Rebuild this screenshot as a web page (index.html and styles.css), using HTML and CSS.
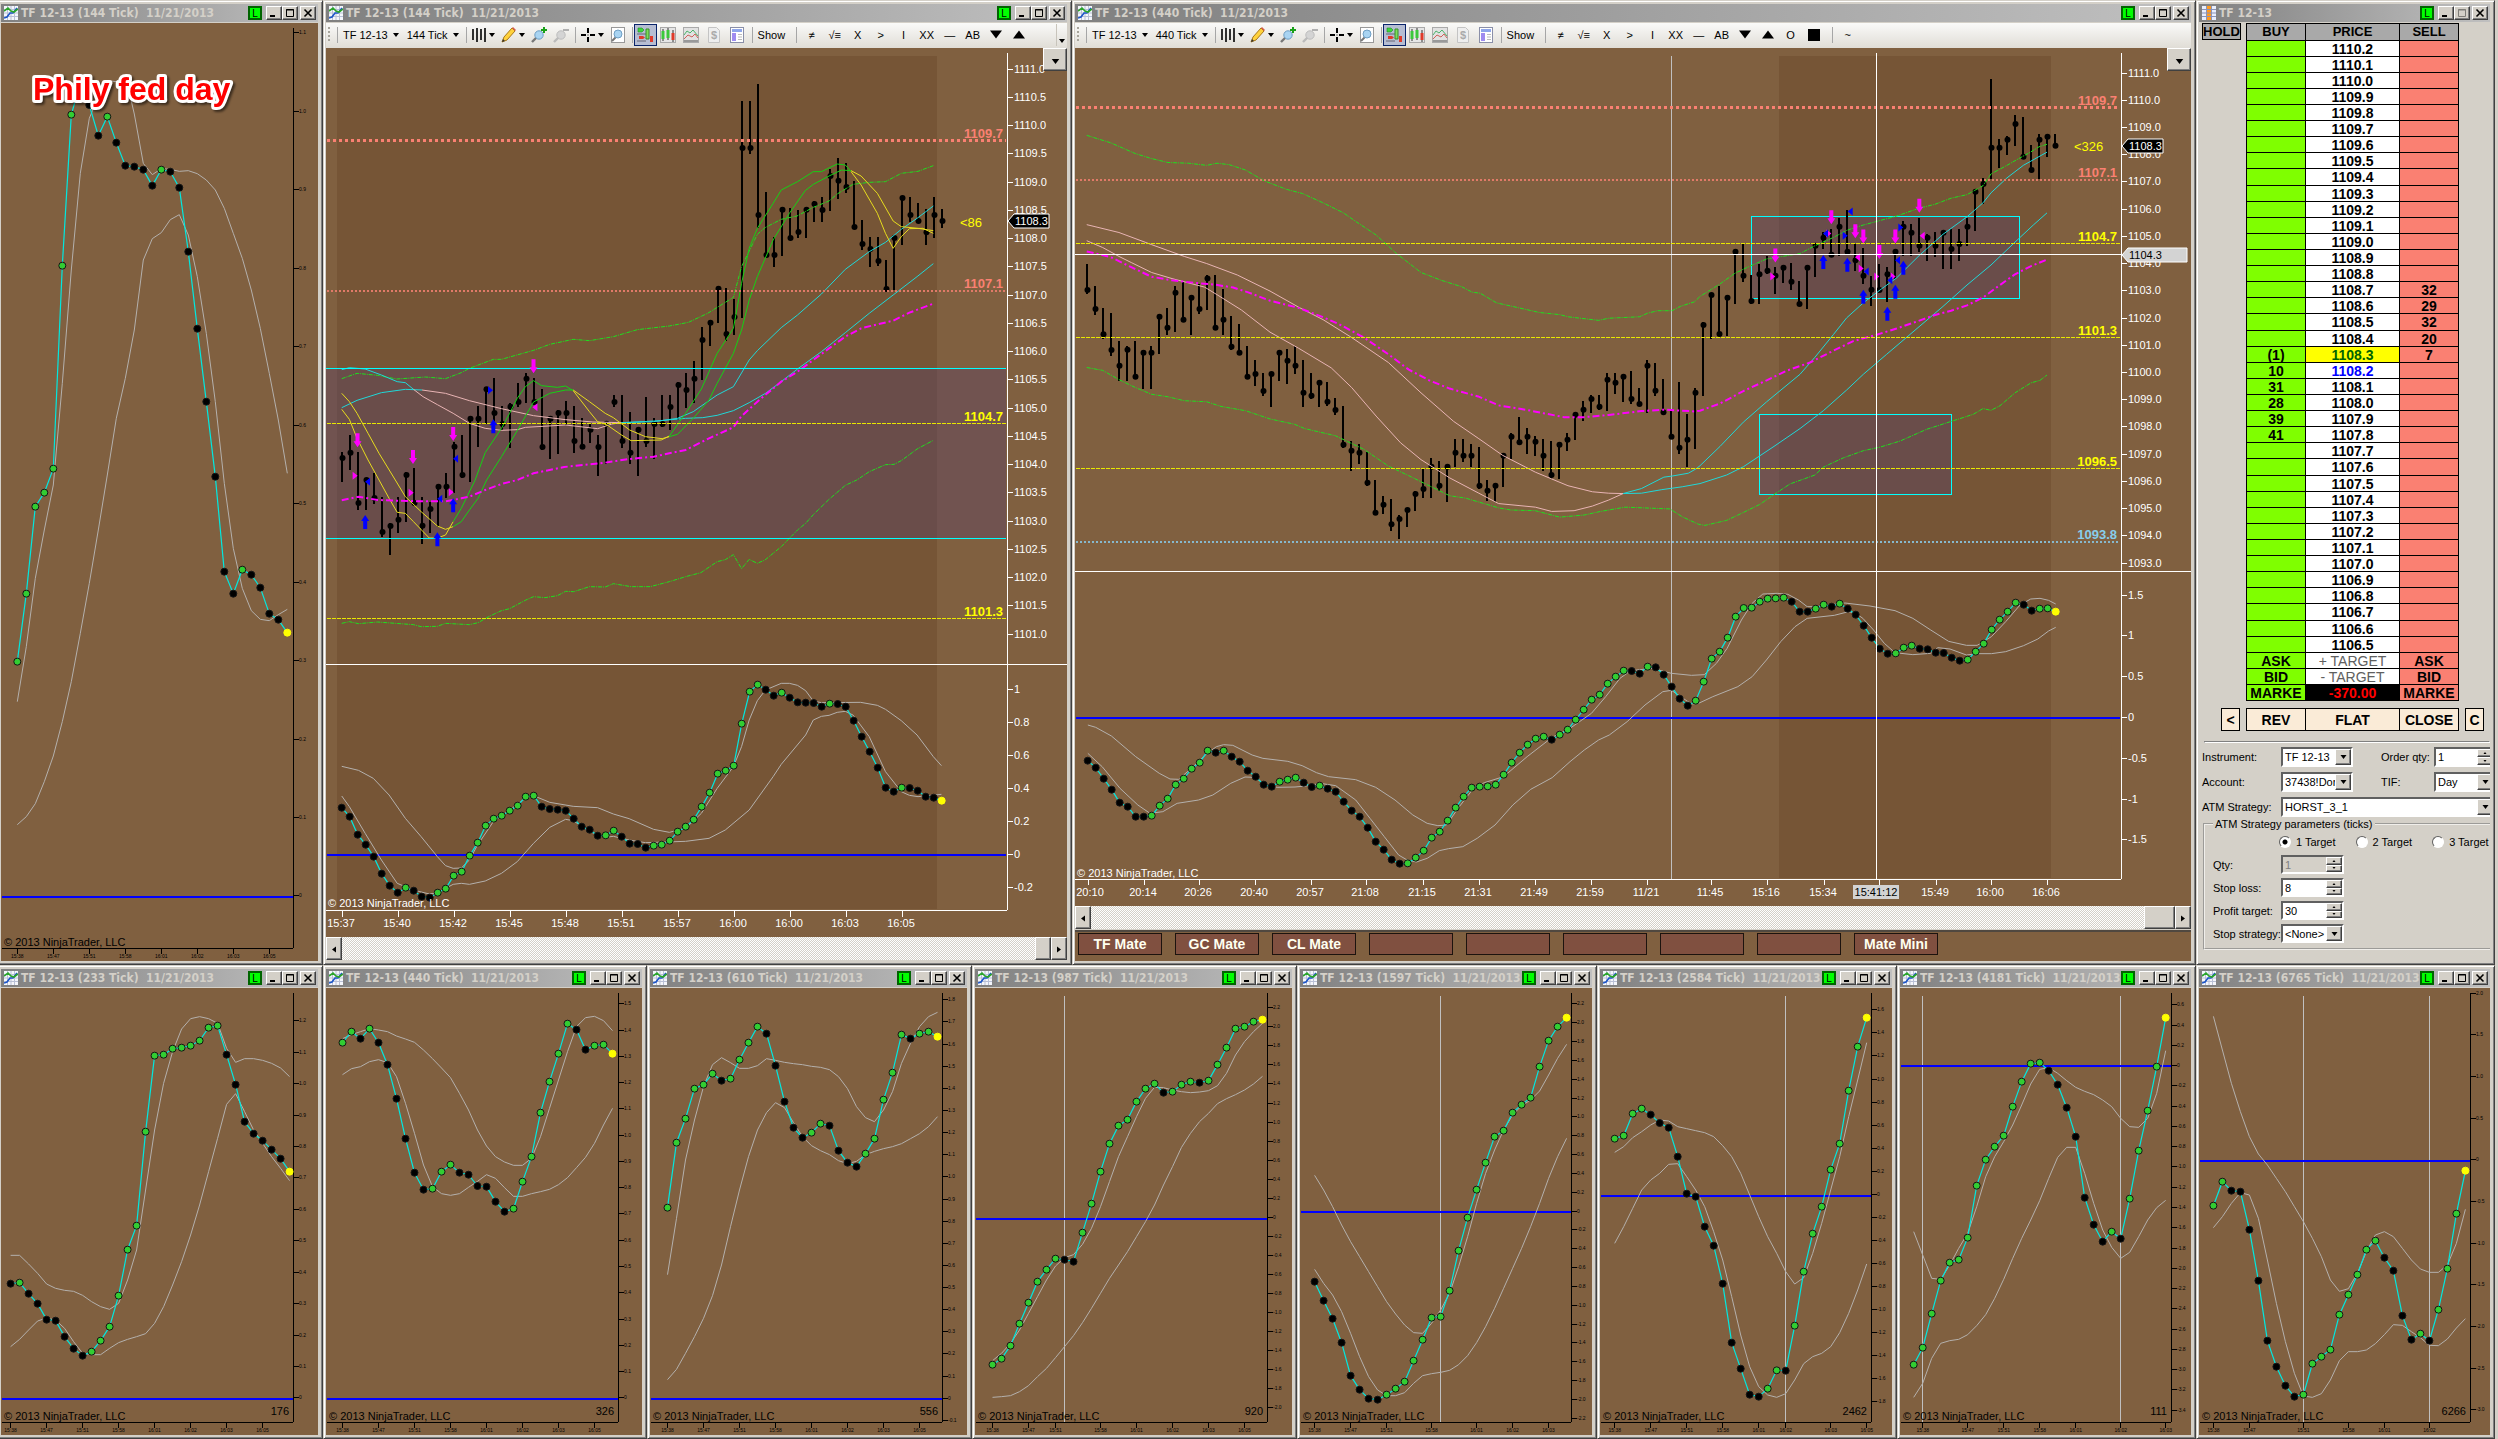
FILE: index.html
```html
<!DOCTYPE html>
<html lang="en">
<head>
  <meta charset="UTF-8" />
  <title>TF 12-13 workspace</title>
  <link rel="stylesheet" href="styles.css">
</head>
<body>

  <!-- shared icons -->
  <svg class="defs" aria-hidden="true">
    <symbol id="i-chart" viewBox="0 0 14 14">
      <rect width="14" height="14" fill="#f4f6fb"/>
      <path d="M0 3.5h14M0 7h14M0 10.5h14M3.5 0v14M7 0v14M10.5 0v14" stroke="#b9c0d6"/>
      <path d="M0 12l3-1 3-4 3 0 4-5" stroke="#1d56c8" stroke-width="1.6" fill="none"/>
      <path d="M0 5l4-3 3 3 3 1 4-3" stroke="#2aa52a" stroke-width="1.6" fill="none"/>
    </symbol>
    <symbol id="i-dom" viewBox="0 0 14 14">
      <rect width="14" height="14" fill="#e8eefc"/>
      <rect x="5" width="4" height="14" fill="#ff9a1e"/>
      <path d="M0 3.5h14M0 7h14M0 10.5h14M4.5 0v14M9.5 0v14" stroke="#8a93b8"/>
    </symbol>
    <symbol id="i-min" viewBox="0 0 12 10"><path d="M2 8h5" stroke="#000" stroke-width="2"/></symbol>
    <symbol id="i-max" viewBox="0 0 12 10"><path d="M2.5 1.5h7v7h-7zM2 2h8" stroke="#000" fill="none"/></symbol>
    <symbol id="i-close" viewBox="0 0 12 10"><path d="M2.5 1.5l7 7M9.5 1.5l-7 7" stroke="#000" stroke-width="1.6"/></symbol>
    <symbol id="i-down" viewBox="0 0 6 4"><path d="M0 0h6L3 4z"/></symbol>
    <symbol id="i-up" viewBox="0 0 6 4"><path d="M0 4h6L3 0z"/></symbol>
    <symbol id="i-left" viewBox="0 0 4 6"><path d="M4 0v6L0 3z"/></symbol>
    <symbol id="i-right" viewBox="0 0 4 6"><path d="M0 0v6l4-3z"/></symbol>
    <symbol id="i-bars" viewBox="0 0 16 16"><path d="M2 2v11M6 1v14M10 2v11M14 1v14" stroke="#000" stroke-width="1.6"/></symbol>
    <symbol id="i-pencil" viewBox="0 0 16 16">
      <path d="M1 15l2-5 8-9 3 3-8 9z" fill="#ffd23c" stroke="#a8781a"/>
      <path d="M1 15l1-3 2 2z" fill="#333"/><path d="M11 1l3 3 1-1-3-3z" fill="#d65b4a"/>
    </symbol>
    <symbol id="i-zoomin" viewBox="0 0 16 16">
      <path d="M6 10l-5 5" stroke="#777" stroke-width="2.4"/>
      <circle cx="8" cy="8" r="4.2" fill="#a9d4f2" stroke="#6f9fc4"/>
      <path d="M13 0v6M10 3h6" stroke="#18a018" stroke-width="2"/>
    </symbol>
    <symbol id="i-zoomout" viewBox="0 0 16 16">
      <path d="M6 10l-5 5" stroke="#bbb" stroke-width="2.4"/>
      <circle cx="8" cy="8" r="4.2" fill="#d4d4d4" stroke="#bdbdbd"/>
      <path d="M10 3h6" stroke="#b0b0b0" stroke-width="2"/>
    </symbol>
    <symbol id="i-cross" viewBox="0 0 16 16"><path d="M8 1v5M8 10v5M1 8h5M10 8h5" stroke="#000" stroke-width="2"/><rect x="7.5" y="7.5" width="1" height="1"/></symbol>
    <symbol id="i-page" viewBox="0 0 16 16">
      <rect x="1.5" y=".5" width="13" height="15" fill="#fff" stroke="#999"/>
      <path d="M6 10l-4 4" stroke="#777" stroke-width="2"/>
      <circle cx="8" cy="7" r="4" fill="#a9d4f2" stroke="#6f9fc4"/>
    </symbol>
    <symbol id="i-trader" viewBox="0 0 16 16">
      <path d="M1 1h4l2 2-2 2H1z" fill="#3cd63c" stroke="#1f8f1f" stroke-width=".6"/>
      <path d="M2 9h4l2 1.500-2 1.500H2z" fill="#e03a2a"/>
      <path d="M0 7h9M0 14h9" stroke="#667"/>
      <path d="M9 2h3v10H9z" fill="#7ddc5a" stroke="#398a2a"/><path d="M13 9h3v6h-3z" fill="#e03a2a"/>
    </symbol>
    <symbol id="i-candles" viewBox="0 0 16 16">
      <rect x=".5" y=".5" width="15" height="15" fill="#e6e6e6" stroke="#aaa"/>
      <path d="M3 2v12M8 1v12M13 3v12" stroke="#333"/>
      <path d="M1.5 4h3v8h-3zM6.5 3h3v8h-3z" fill="#3cc83c"/><path d="M11.500 6h3v7h-3z" fill="#e03a2a"/>
    </symbol>
    <symbol id="i-lines" viewBox="0 0 16 16">
      <rect x=".5" y=".5" width="15" height="15" fill="#e2e2e2" stroke="#aaa"/>
      <path d="M1 8l3-4 3 2 3-3 5 6" stroke="#4db36b" fill="none"/><path d="M1 12l4-4 4 2 3-3 3 4" stroke="#d0605a" fill="none"/>
      <path d="M1 14h14" stroke="#999" stroke-width="2"/>
    </symbol>
    <symbol id="i-money" viewBox="0 0 16 16">
      <path d="M2.500.5h8l3 3v12h-11z" fill="#eee" stroke="#c4c4c4"/>
      <text x="8" y="12" font-size="11" font-weight="bold" text-anchor="middle" fill="#aaa">$</text>
    </symbol>
    <symbol id="i-props" viewBox="0 0 16 16">
      <rect x="1.500" y=".5" width="13" height="15" fill="#fff" stroke="#8a8fa8"/>
      <rect x="3" y="2" width="10" height="3" fill="#8ea6ea"/><rect x="3" y="6" width="4" height="8" fill="#9f8cf0"/>
      <path d="M9 7.5h4M9 10h4M9 12.500h4" stroke="#bbb"/>
    </symbol>
  </svg>

  <main class="desktop">
    <div class="row row-top">

      <section class="window">
        <header class="titlebar">
          <svg class="app-icon"><use href="#i-chart"/></svg>
          <h2>TF 12-13 (144 Tick)&nbsp; 11/21/2013</h2>
          <span class="link">L</span>
          <button class="cap" aria-label="Minimize"><svg><use href="#i-min"/></svg></button><button class="cap" aria-label="Maximize"><svg><use href="#i-max"/></svg></button>
          <button class="cap cap-close" aria-label="Close"><svg><use href="#i-close"/></svg></button>
        </header>
        <svg class="chart" id="c144"></svg>
      </section>

      <section class="window">
        <header class="titlebar">
          <svg class="app-icon"><use href="#i-chart"/></svg>
          <h2>TF 12-13 (144 Tick)&nbsp; 11/21/2013</h2>
          <span class="link">L</span>
          <button class="cap" aria-label="Minimize"><svg><use href="#i-min"/></svg></button><button class="cap" aria-label="Maximize"><svg><use href="#i-max"/></svg></button>
          <button class="cap cap-close" aria-label="Close"><svg><use href="#i-close"/></svg></button>
        </header>
        <div class="toolbar">
          <span class="grip"></span><span class="sep"></span>
          <button>TF 12-13 <svg class="arrow"><use href="#i-down"/></svg></button>
          <button>144 Tick <svg class="arrow"><use href="#i-down"/></svg></button>
          <span class="sep"></span>
          <button class="tool" aria-label="Bar style"><svg><use href="#i-bars"/></svg><svg class="arrow"><use href="#i-down"/></svg></button>
          <button class="tool" aria-label="Draw"><svg><use href="#i-pencil"/></svg><svg class="arrow"><use href="#i-down"/></svg></button>
          <button class="tool" aria-label="Zoom in"><svg><use href="#i-zoomin"/></svg></button>
          <button class="tool" aria-label="Zoom out"><svg><use href="#i-zoomout"/></svg></button>
          <span class="sep"></span>
          <button class="tool" aria-label="Crosshair"><svg><use href="#i-cross"/></svg><svg class="arrow"><use href="#i-down"/></svg></button>
          <button class="tool" aria-label="Preview"><svg><use href="#i-page"/></svg></button>
          <span class="sep"></span>
          <button class="tool active" aria-label="Chart trader"><svg><use href="#i-trader"/></svg></button>
          <button class="tool" aria-label="Data series"><svg><use href="#i-candles"/></svg></button>
          <button class="tool" aria-label="Indicators"><svg><use href="#i-lines"/></svg></button>
          <button class="tool" aria-label="Strategies"><svg><use href="#i-money"/></svg></button>
          <button class="tool" aria-label="Properties"><svg><use href="#i-props"/></svg></button>
          <span class="sep"></span>
          <button>Show</button>
          <span class="sep sep-wide"></span>
          <button class="glyph">≠</button><button class="glyph">√≡</button><button class="glyph">X</button><button class="glyph">&gt;</button><button class="glyph">I</button><button class="glyph">XX</button><button class="glyph">—</button><button class="glyph">AB</button>
          <button class="glyph tri" aria-label="Arrow down"><svg><use href="#i-down"/></svg></button>
          <button class="glyph tri" aria-label="Arrow up"><svg><use href="#i-up"/></svg></button>
          <button class="more" aria-label="More tools"><svg class="arrow"><use href="#i-down"/></svg></button>
        </div>
        <div class="chart-area">
          <svg class="chart" id="p144"></svg>
          <button class="corner" aria-label="Chart trader menu"><svg><use href="#i-down"/></svg></button>
        </div>
        <div class="scroll">
          <button aria-label="Scroll left"><svg><use href="#i-left"/></svg></button>
          <span class="track"></span>
          <span class="thumb"></span>
          <button aria-label="Scroll right"><svg><use href="#i-right"/></svg></button>
        </div>
      </section>

      <section class="window">
        <header class="titlebar">
          <svg class="app-icon"><use href="#i-chart"/></svg>
          <h2>TF 12-13 (440 Tick)&nbsp; 11/21/2013</h2>
          <span class="link">L</span>
          <button class="cap" aria-label="Minimize"><svg><use href="#i-min"/></svg></button><button class="cap" aria-label="Maximize"><svg><use href="#i-max"/></svg></button>
          <button class="cap cap-close" aria-label="Close"><svg><use href="#i-close"/></svg></button>
        </header>
        <div class="toolbar">
          <span class="grip"></span><span class="sep"></span>
          <button>TF 12-13 <svg class="arrow"><use href="#i-down"/></svg></button>
          <button>440 Tick <svg class="arrow"><use href="#i-down"/></svg></button>
          <span class="sep"></span>
          <button class="tool" aria-label="Bar style"><svg><use href="#i-bars"/></svg><svg class="arrow"><use href="#i-down"/></svg></button>
          <button class="tool" aria-label="Draw"><svg><use href="#i-pencil"/></svg><svg class="arrow"><use href="#i-down"/></svg></button>
          <button class="tool" aria-label="Zoom in"><svg><use href="#i-zoomin"/></svg></button>
          <button class="tool" aria-label="Zoom out"><svg><use href="#i-zoomout"/></svg></button>
          <span class="sep"></span>
          <button class="tool" aria-label="Crosshair"><svg><use href="#i-cross"/></svg><svg class="arrow"><use href="#i-down"/></svg></button>
          <button class="tool" aria-label="Preview"><svg><use href="#i-page"/></svg></button>
          <span class="sep"></span>
          <button class="tool active" aria-label="Chart trader"><svg><use href="#i-trader"/></svg></button>
          <button class="tool" aria-label="Data series"><svg><use href="#i-candles"/></svg></button>
          <button class="tool" aria-label="Indicators"><svg><use href="#i-lines"/></svg></button>
          <button class="tool" aria-label="Strategies"><svg><use href="#i-money"/></svg></button>
          <button class="tool" aria-label="Properties"><svg><use href="#i-props"/></svg></button>
          <span class="sep"></span>
          <button>Show</button>
          <span class="sep sep-wide"></span>
          <button class="glyph">≠</button><button class="glyph">√≡</button><button class="glyph">X</button><button class="glyph">&gt;</button><button class="glyph">I</button><button class="glyph">XX</button><button class="glyph">—</button><button class="glyph">AB</button>
          <button class="glyph tri" aria-label="Arrow down"><svg><use href="#i-down"/></svg></button>
          <button class="glyph tri" aria-label="Arrow up"><svg><use href="#i-up"/></svg></button>
          <button class="glyph">O</button>
          <button class="glyph" aria-label="Square"><span class="square"></span></button>
          <span class="sep sep-wide"></span>
          <button class="glyph">~</button>
        </div>
        <div class="chart-area">
          <svg class="chart" id="p440"></svg>
          <button class="corner" aria-label="Chart trader menu"><svg><use href="#i-down"/></svg></button>
        </div>
        <div class="scroll">
          <button aria-label="Scroll left"><svg><use href="#i-left"/></svg></button>
          <span class="track"></span>
          <span class="thumb thumb-wide"></span>
          <button aria-label="Scroll right"><svg><use href="#i-right"/></svg></button>
        </div>
        <div class="mates">
          <button>TF Mate</button><button>GC Mate</button><button>CL Mate</button>
          <button aria-label="Slot 4"></button><button aria-label="Slot 5"></button><button aria-label="Slot 6"></button>
          <button aria-label="Slot 7"></button><button aria-label="Slot 8"></button><button>Mate Mini</button>
        </div>
      </section>

      <section class="window">
        <header class="titlebar">
          <svg class="app-icon"><use href="#i-dom"/></svg>
          <h2>TF 12-13</h2>
          <span class="link">L</span>
          <button class="cap" aria-label="Minimize"><svg><use href="#i-min"/></svg></button><button class="cap" aria-label="Maximize" disabled><svg><use href="#i-max"/></svg></button>
          <button class="cap cap-close" aria-label="Close"><svg><use href="#i-close"/></svg></button>
        </header>
        <div class="dom">
          <div class="ladder-row">
            <button class="hold">HOLD</button>
            <table class="ladder">
              <thead><tr><th>BUY</th><th>PRICE</th><th>SELL</th></tr></thead>
              <tbody id="ladder"></tbody>
              <tfoot>
                <tr><td>ASK</td><td class="target">+ TARGET</td><td>ASK</td></tr>
                <tr><td>BID</td><td class="target">- TARGET</td><td>BID</td></tr>
                <tr><td>MARKE</td><td class="pnl">-370.00</td><td>MARKE</td></tr>
              </tfoot>
            </table>
          </div>
          <div class="orders">
            <button class="side">&lt;</button>
            <div class="trio"><button>REV</button><button>FLAT</button><button>CLOSE</button></div>
            <button class="side">C</button>
          </div>
          <hr>
          <form class="ticket">
            <div class="fields">
              <label for="instrument">Instrument:</label>
              <span class="combo"><select id="instrument"><option>TF 12-13</option></select><i><svg><use href="#i-down"/></svg></i></span>
              <label for="qty" class="second">Order qty:</label>
              <span class="spin"><input id="qty" type="text" value="1"><span><button type="button" aria-label="More"><svg><use href="#i-up"/></svg></button><button type="button" aria-label="Less"><svg><use href="#i-down"/></svg></button></span></span>
              <label for="account">Account:</label>
              <span class="combo"><select id="account"><option>37438!Dor</option></select><i><svg><use href="#i-down"/></svg></i></span>
              <label for="tif" class="second">TIF:</label>
              <span class="combo"><select id="tif"><option>Day</option></select><i><svg><use href="#i-down"/></svg></i></span>
              <label for="atm">ATM Strategy:</label>
              <span class="combo long"><select id="atm"><option>HORST_3_1</option></select><i><svg><use href="#i-down"/></svg></i></span>
            </div>
            <fieldset>
              <legend>ATM Strategy parameters (ticks)</legend>
              <div class="targets">
                <label><input type="radio" name="t" checked>1 Target</label>
                <label><input type="radio" name="t">2 Target</label>
                <label><input type="radio" name="t">3 Target</label>
              </div>
              <div class="params">
                <label for="pqty">Qty:</label>
                <span class="spin"><input id="pqty" type="text" value="1" disabled><span><button type="button" aria-label="More" disabled><svg><use href="#i-up"/></svg></button><button type="button" aria-label="Less" disabled><svg><use href="#i-down"/></svg></button></span></span>
                <label for="stop">Stop loss:</label>
                <span class="spin"><input id="stop" type="text" value="8"><span><button type="button" aria-label="More"><svg><use href="#i-up"/></svg></button><button type="button" aria-label="Less"><svg><use href="#i-down"/></svg></button></span></span>
                <label for="profit">Profit target:</label>
                <span class="spin"><input id="profit" type="text" value="30"><span><button type="button" aria-label="More"><svg><use href="#i-up"/></svg></button><button type="button" aria-label="Less"><svg><use href="#i-down"/></svg></button></span></span>
                <label for="strategy">Stop strategy:</label>
                <span class="combo"><select id="strategy"><option>&lt;None&gt;</option></select><i><svg><use href="#i-down"/></svg></i></span>
              </div>
            </fieldset>
          </form>
        </div>
      </section>
    </div>

    <div class="row row-bottom" id="small"></div>
  </main>

  <script src="charts.js"></script>
</body>
</html>
```

FILE: styles.css
```css
* {
  box-sizing: border-box;
}

body {
  margin: 0;
  background: #d4d0c8;
  font-family: "Liberation Sans", Arial, sans-serif;
  font-size: 11px;
  color: #000;
  overflow: hidden;
}

button, input, select {
  font: inherit;
  color: inherit;
  margin: 0;
  padding: 0;
}

.defs {
  display: none;
}

.desktop {
  margin-left: -2px;
  height: 100vh;
  display: grid;
  grid-template-rows: 965fr 474fr;
}

.row {
  display: grid;
  min-height: 0;
}

.row-top {
  grid-template-columns: 325fr 749fr 1124fr 299fr;
  padding-right: 3px;
}

.row-bottom {
  grid-template-columns: 325fr 324fr 325fr 325fr 300fr 300fr 299fr 299fr;
  padding-right: 3px;
}

/* window frame */
.window {
  display: flex;
  flex-direction: column;
  min-width: 0;
  min-height: 0;
  background: #d4d0c8;
  border: 1px solid;
  border-color: #d4d0c8 #404040 #404040 #d4d0c8;
  box-shadow: inset 1px 1px #fff, inset -1px -1px #808080;
  padding: 3px 4px 3px 2px;
}

.titlebar {
  display: flex;
  align-items: center;
  height: 18px;
  flex: none;
  margin-bottom: 1px;
  padding: 0 2px 0 3px;
  background: linear-gradient(90deg, #808080, #c0c0c0);
}

.titlebar h2 {
  flex: 1;
  margin: 0 0 0 3px;
  min-width: 0;
  white-space: nowrap;
  color: #d4d0c8;
  font: bold 12px/16px "DejaVu Sans Condensed", "DejaVu Sans", sans-serif;
}

.app-icon {
  width: 14px;
  height: 14px;
}

.link {
  width: 14px;
  height: 14px;
  margin-right: 4px;
  border: 2px solid #006400;
  background: #0f0;
  font-size: 10px;
  line-height: 11px;
  text-align: center;
}

.cap, .scroll button, .thumb, .corner, .combo i, .spin button {
  background: #d4d0c8;
  border: 1px solid;
  border-color: #fff #404040 #404040 #fff;
  box-shadow: inset -1px -1px #808080;
}

.cap {
  width: 16px;
  height: 14px;
  line-height: 0;
}

.cap svg {
  width: 12px;
  height: 10px;
}

.cap:disabled svg {
  opacity: .4;
}

.cap-close {
  margin-left: 2px;
}

.chart-area {
  position: relative;
  flex: 1;
  min-height: 0;
  display: flex;
}

.chart {
  flex: 1;
  min-height: 0;
  min-width: 0;
  display: block;
  background: #806040;
}

.corner {
  position: absolute;
  top: 0;
  right: 0;
  width: 24px;
  height: 23px;
}

.corner svg {
  width: 9px;
  height: 5px;
}

/* toolbar */
.toolbar {
  display: flex;
  align-items: center;
  height: 25px;
  flex: none;
  padding: 0 0 2px 2px;
  overflow: hidden;
  background: linear-gradient(#fafaf9, #e0ddd6);
}

.toolbar button {
  display: flex;
  align-items: center;
  gap: 5px;
  height: 22px;
  padding: 0 4px;
  border: 0;
  background: none;
  white-space: nowrap;
}

.toolbar .tool {
  gap: 2px;
  padding: 0 3px;
}

.tool svg {
  width: 16px;
  height: 16px;
}

.toolbar .arrow {
  width: 6px;
  height: 4px;
}

.toolbar .active {
  background: #b6bdd2;
  outline: 1px solid #0a246a;
  outline-offset: -1px;
}

.toolbar .active, .active ~ .tool {
  width: 23px;
}

.grip {
  width: 2px;
  height: 16px;
  margin-right: 7px;
  background: repeating-linear-gradient(#a8a59c 0 2px, transparent 2px 4px);
}

.sep {
  width: 1px;
  height: 16px;
  margin: 0 1px 0 3px;
  background: #a6a6a6;
}

.grip + .sep {
  margin: 0 1px 0 0;
}

.sep-wide {
  margin: 0 3px 0 7px;
}

.toolbar .glyph {
  justify-content: center;
  width: 23px;
  padding: 0;
}

.tri svg {
  width: 12px;
  height: 9px;
}

.square {
  width: 12px;
  height: 12px;
  background: #000;
}

.toolbar .more {
  margin-left: auto;
  padding: 12px 2px 0;
  border-left: 1px solid #c8c4bb;
}

/* scrollbar */
.scroll {
  display: flex;
  height: 24px;
  flex: none;
  padding-bottom: 1px;
  background: #d4d0c8;
}

.scroll button {
  width: 16px;
}

.scroll svg {
  width: 4px;
  height: 7px;
}

.track {
  flex: 1;
  background: repeating-conic-gradient(#fff 0 25%, #d4d0c8 0 50%) 0 0 / 2px 2px;
}

.thumb {
  width: 16px;
}

.thumb-wide {
  width: 31px;
}

.mates {
  display: flex;
  gap: 13px;
  height: 31px;
  flex: none;
  padding: 1px 3px 6px;
  border-top: 2px solid #504840;
  background: #806040;
}

.mates button {
  width: 84px;
  border: 1px solid #1c130e;
  background: #805040;
  color: #fffff0;
  font-size: 14px;
  font-weight: bold;
}

/* price ladder */
.dom {
  flex: 1;
  min-height: 0;
  overflow: hidden;
  font-size: 11px;
}

.ladder-row {
  display: flex;
  align-items: flex-start;
  gap: 5px;
  padding-left: 3px;
}

.hold {
  width: 39px;
  height: 17px;
  border: 1px solid #000;
  background: #a9a9a9;
  font-size: 13px;
  font-weight: bold;
  line-height: 15px;
}

.hold, .ladder {
  white-space: nowrap;
}

.ladder {
  width: 213px;
  table-layout: fixed;
  border-collapse: collapse;
  font-size: 14px;
  font-weight: bold;
  line-height: 14px;
  text-align: center;
}

.ladder tr {
  height: 16px;
}

/* ladder rows are a touch over 16px on average */
.ladder tbody tr:nth-child(9n), .ladder thead tr {
  height: 17px;
}

.ladder th, .ladder td {
  padding: 0;
  border: 1px solid #000;
  overflow: hidden;
}

.ladder th {
  background: #a9a9a9;
  font-size: 13px;
}

.ladder th:nth-child(2) {
  width: 94px;
}

.ladder td:nth-child(1) { background: #7fff00; }
.ladder td:nth-child(2) { background: #fff; }
.ladder td:nth-child(3) { background: #fa8072; }

.ladder td.last { background: #ff0; color: #006400; }
.ladder td.bid { color: #00f; }
.ladder td.target { color: #606060; font-weight: normal; }
.ladder td.pnl { background: #000; color: #f00; }

.orders {
  display: flex;
  gap: 6px;
  margin: 7px 0 10px;
  padding-left: 22px;
}

.orders button {
  height: 23px;
  border: 1px solid #000;
  background: #faebd7;
  font-size: 14px;
  font-weight: bold;
}

.orders .side {
  width: 19px;
}

.trio {
  display: grid;
  grid-template-columns: 60px 94px 59px;
}

.trio button + button {
  border-left: 0;
}

hr {
  margin: 0 0 4px 5px;
  border: 1px solid;
  border-color: #808080 #fff #fff #808080;
}

.fields {
  display: grid;
  grid-template-columns: 79px 72px 81px 1fr;
  row-gap: 5px;
  align-items: center;
  margin-right: -5px;
  padding-left: 3px;
}

.fields .second {
  padding-left: 28px;
}

.fields .long {
  grid-column: span 3;
}

.combo, .spin {
  display: flex;
  height: 20px;
  min-width: 0;
  border: 2px solid;
  border-color: #606060 #fff #fff #606060;
  background: #fff;
}

.combo select, .spin input {
  flex: 1;
  width: 0;
  min-width: 0;
  padding-left: 2px;
  border: 0;
  background: none;
  appearance: none;
}

.combo i {
  display: flex;
  align-items: center;
  justify-content: center;
  width: 16px;
}

.combo svg {
  width: 7px;
  height: 4px;
}

.spin > span {
  display: flex;
  flex-direction: column;
  width: 16px;
}

.spin button {
  flex: 1;
  min-height: 0;
  line-height: 0;
}

.spin svg {
  display: block;
  width: 4px;
  height: 2px;
  margin: auto;
}

.spin :disabled {
  color: #808080;
}

.spin:has(:disabled) {
  background: #d4d0c8;
}

fieldset {
  height: 132px;
  margin: 1px 0 0 4px;
  padding: 0 0 0 8px;
  border: 2px groove #f0eeea;
  border-right: 0;
}

legend {
  padding: 0 2px;
}

.targets {
  display: flex;
  gap: 20px;
  padding: 6px 0 7px 66px;
  white-space: nowrap;
}

.targets label {
  display: flex;
  align-items: center;
  gap: 5px;
}

.targets input {
  width: 12px;
  height: 12px;
  appearance: none;
  border: 1px solid #606060;
  border-right-color: #fff;
  border-bottom-color: #fff;
  border-radius: 50%;
  background: #fff;
}

.targets input:checked {
  background: radial-gradient(#000 0 2px, #fff 3px);
}

.params {
  display: grid;
  grid-template-columns: 68px 63px;
  row-gap: 4px;
  align-items: center;
  white-space: nowrap;
}

.params .spin, .params .combo {
  height: 19px;
}

/* chart marks */
.axis {
  shape-rendering: crispEdges;
}

.tiny {
  font-size: 5px;
}

.stamp {
  font-size: 11px;
}

.tick-label {
  font-size: 11px;
  fill: #fff;
}

.level-label {
  font-size: 13px;
  font-weight: bold;
  text-anchor: end;
}

.countdown {
  font-size: 13px;
  fill: #ff0;
}

.note {
  font-size: 32px;
  font-weight: bold;
  fill: #f00;
  stroke: #fff;
  stroke-width: 6px;
  stroke-linejoin: round;
  paint-order: stroke;
  filter: drop-shadow(2px 2px 1px #0008);
}
```

FILE: charts.js
```js
const NS = 'http://www.w3.org/2000/svg';

function add(parent, tag, attrs, text) {
  const node = document.createElementNS(NS, tag);
  for (const key in attrs) node.setAttribute(key, attrs[key]);
  if (text !== undefined) node.textContent = text;
  parent.appendChild(node);
  return node;
}

function line(svg, x1, y1, x2, y2, stroke, width = 1, extra = {}) {
  return add(svg, 'line', { x1, y1, x2, y2, stroke, 'stroke-width': width, class: 'axis', ...extra });
}

function poly(svg, points, stroke, extra = {}) {
  return add(svg, 'polyline', { points: points.map(p => p.join()).join(' '), fill: 'none', stroke, ...extra });
}

// flat [x, y, x, y ...] -> points, scaled from an origin
function scaled(list, ox, oy, sx, sy) {
  const out = [];
  for (let i = 0; i < list.length; i += 2) out.push([ox + list[i] / sx, oy + list[i + 1] / sy]);
  return out;
}

// rising dots are green, falling ones black, the running bar yellow
function dots(svg, points, firstUp, r = 3.5) {
  poly(svg, points, '#00e8e0', { 'stroke-width': 1.2 });
  points.forEach(([x, y], i) => {
    const up = i ? y < points[i - 1][1] : firstUp;
    const last = i === points.length - 1;
    add(svg, 'circle', { cx: x, cy: y, r, fill: last ? '#ff0' : up ? '#32cd32' : '#000', stroke: last ? '#ff0' : '#151515' });
  });
}

/* ---------- oscillator windows ---------- */

const small = [
  { id: 'c144', box: [1, 23, 317, 938], x0: 17.3, y0: 0, zero: 896, up: true,
    ticks: [97, 235.4, 12, 1.1, .1], note: 'Phily fed day',
    dots: [1985,1781,1520,1478,1406,797,344,250,315,407,350,428,497,500,509,557,509,515,563,755,986,1205,1430,1715,1781,1709,1724,1763,1841,1859,1898],
    a: [2105,1940,1735,1590,1455,1150,810,520,355,290,242,245,225,342,490,524,506,508,514,512,521,540,570,625,700,775,870,985,1120,1260,1420],
    b: [2474,2450,2411,2345,2268,2165,2045,1900,1750,1590,1425,1255,1135,990,780,716,698,659,644,705,830,1000,1205,1450,1645,1765,1832,1858,1862,1844,1828] },
  { id: 'c233', name: '233', box: [1, 988, 317, 447], x0: 10.6, zero: 1398, up: false, count: '176', ticks: [181, 94.25, 13, 1.2, .1],
    dots: [971,968,1001,1031,1079,1082,1130,1166,1187,1175,1142,1100,1007,869,797,515,287,284,266,263,257,242,203,197,284,374,485,521,542,569,596,635],
    a: [886,886,912,940,972,985,991,994,1006,1025,1040,1048,1030,960,870,690,510,370,275,207,176,170,176,190,265,307,296,296,301,310,324,350],
    b: [1160,1138,1110,1083,1074,1080,1105,1145,1180,1184,1184,1165,1148,1138,1130,1121,1090,1040,975,905,825,735,635,535,433,401,455,510,550,590,625,662] },
  { id: 'c440', name: '440', box: [326, 988, 316, 447], x0: 342.5, zero: 1398, up: true, count: '326', ticks: [130, 78.8, 16, 1.5, .1],
    dots: [248,215,236,206,248,314,416,536,638,689,686,635,614,638,644,678,680,725,755,746,665,590,458,365,281,191,209,269,257,254,281],
    a: [236,224,215,206,210,215,228,237,247,270,296,324,353,400,450,510,558,590,606,616,616,595,530,445,360,275,200,173,169,182,212],
    b: [344,326,320,305,299,308,350,430,520,615,680,701,706,701,682,664,644,655,683,709,709,701,695,688,674,653,623,592,550,495,445] },
  { id: 'c610', name: '610', box: [650, 988, 317, 447], x0: 667.5, zero: 1398, up: true, count: '556', ticks: [118, 66.4, 20, 1.8, .1],
    dots: [743,548,476,386,374,341,362,356,299,248,200,221,317,425,503,533,518,491,497,572,608,620,581,536,419,338,224,236,221,215,230],
    a: [944,775,600,480,380,314,293,308,325,325,317,296,301,307,311,314,319,322,329,350,386,440,473,485,450,395,310,250,200,170,157],
    b: [1259,1228,1180,1130,1075,1007,915,800,690,590,510,458,428,443,488,530,557,572,584,602,611,604,584,574,566,560,551,536,521,500,470] },
  { id: 'c987', name: '987', box: [975, 988, 317, 447], x0: 992.5, zero: 1218, up: true, count: '920', ticks: [142, 57.1, 22, 2.2, .2],
    marks: [0,4,7,12,16,20,24,28], days: [8],
    dots: [1214,1196,1157,1091,1028,965,929,896,899,905,818,731,635,551,497,479,425,386,371,398,395,374,365,368,362,314,263,206,200,185,179],
    a: [1202,1180,1150,1110,1060,1010,960,918,893,884,853,805,740,665,590,530,470,415,382,383,390,395,398,396,392,377,340,285,245,215,190],
    b: [1312,1310,1307,1295,1277,1250,1225,1193,1160,1127,1088,1045,1000,955,915,875,830,785,735,675,620,562,520,485,460,431,416,404,390,372,349] },
  { id: 'c1597', name: '1597', box: [1300, 988, 292, 447], x0: 1314.6, zero: 1211, up: false, ticks: [130, 56.5, 23, 2.2, .2],
    marks: [0,4,8,13,18,22,26], days: [14],
    dots: [965,1022,1076,1148,1247,1289,1316,1319,1304,1286,1265,1202,1139,1073,1070,992,872,773,689,608,530,512,458,434,413,320,242,200,173],
    a: [646,690,740,795,845,890,935,980,1025,1062,1095,1118,1120,1090,1050,1000,920,830,730,640,570,510,465,437,420,393,345,295,253],
    b: [928,970,1005,1055,1120,1190,1250,1290,1307,1307,1298,1270,1247,1241,1237,1231,1214,1187,1148,1100,1045,985,925,865,800,730,655,590,535] },
  { id: 'c2584', name: '2584', box: [1600, 988, 292, 447], x0: 1614.7, zero: 1195, up: true, count: '2462', ticks: [148, 69.2, 18, 1.6, .2],
    marks: [0,4,8,12,16,19,24,28], days: [19],
    dots: [536,527,461,446,464,489,503,590,701,710,800,857,971,1148,1226,1304,1310,1286,1231,1232,1097,935,821,740,629,551,392,260,173],
    a: [577,560,533,515,495,480,483,500,506,512,518,530,557,590,640,705,770,830,880,935,972,953,880,790,690,590,470,360,248],
    b: [850,800,745,690,660,640,613,611,650,690,740,815,900,1010,1125,1220,1280,1305,1312,1301,1260,1211,1190,1180,1160,1118,1060,990,912] },
  { id: 'c4181', name: '4181', box: [1900, 988, 291, 447], x0: 1913.7, zero: 1065, up: true, count: '111', ticks: [133, 60.8, 21, .6, .2],
    marks: [1,6,10,14,18,23,28], days: [1, 23],
    dots: [1214,1163,1061,962,908,899,833,677,599,560,527,440,365,311,308,332,374,443,530,713,794,845,815,836,716,572,452,320,173],
    a: [815,885,955,958,915,865,820,740,650,590,545,495,435,372,328,323,340,362,382,394,404,420,440,475,500,502,475,400,272],
    b: [1312,1270,1195,1150,1142,1138,1124,1097,1064,1015,958,895,835,780,722,655,592,562,562,640,730,810,862,895,877,830,780,743,721] },
  { id: 'c6765', name: '6765', box: [2199, 988, 291, 447], x0: 2213.4, zero: 1160, up: true, count: '6266', ticks: [98, 125, 11, 2, .5],
    marks: [0,4,10,15,19,24], days: [10, 24],
    dots: [737,665,692,695,809,962,1142,1220,1277,1310,1304,1211,1190,1169,1064,1004,944,869,842,893,932,1067,1139,1121,1142,1049,926,761,632],
    a: [169,270,370,455,530,582,615,655,695,740,785,835,890,960,994,986,940,875,825,815,830,865,900,927,937,937,915,850,748],
    b: [803,770,730,698,705,775,900,1030,1145,1240,1308,1312,1301,1260,1202,1175,1175,1170,1151,1124,1094,1096,1115,1133,1156,1157,1137,1104,1076] },
];

const times = ['15:38', '15:47', '15:51', '15:58', '16:01', '16:02', '16:03', '16:05'];

// the bottom row reuses the first window's title bar
const row = document.getElementById('small');
small.filter(c => c.name).forEach(c => {
  const win = document.createElement('section');
  win.className = 'window';
  const bar = document.querySelector('.titlebar').cloneNode(true);
  bar.querySelector('h2').textContent = `TF 12-13 (${c.name} Tick)\u00a0 11/21/2013`;
  win.appendChild(bar);
  add(win, 'svg', { class: 'chart', id: c.id });
  row.appendChild(win);
});

function drawSmall(c) {
  const svg = document.getElementById(c.id);
  const [left, top, w, h] = c.box;
  svg.setAttribute('viewBox', c.box.join(' '));
  const y0 = c.y0 === undefined ? 960 : c.y0;
  const axis = left + (w > 300 ? 292 : 271);
  const bottom = top + h - 13;
  const at = list => list.map((v, i) => [c.x0 + 9 * i, y0 + v / 3]);

  (c.days || []).forEach(i => line(svg, c.x0 + 9 * i, top + 8, c.x0 + 9 * i, bottom, '#c0c0c0'));
  line(svg, axis, top + 5, axis, bottom, '#000');
  line(svg, left + 1, bottom, axis, bottom, '#000');

  const [first, step, n, value, dv] = c.ticks;
  for (let i = 0; i < n; i++) {
    const y = Math.round(y0 + (first + step * i) / 3);
    const v = value - dv * i;
    line(svg, axis, y, axis + 6, y, '#000');
    add(svg, 'text', { x: axis + 6, y: y + 2, class: 'tiny' }, Math.abs(v) < .01 ? '0' : v.toFixed(1));
  }
  (c.marks || [0, 4, 8, 12, 16, 20, 24, 28]).forEach((m, i) => {
    const x = c.x0 + 9 * m;
    line(svg, x, bottom, x, bottom + 6, '#000');
    add(svg, 'text', { x, y: bottom + 10, class: 'tiny', 'text-anchor': 'middle' }, times[i]);
  });

  line(svg, left + 1, c.zero + 1, axis, c.zero + 1, '#00f', 2);
  poly(svg, at(c.a), '#b4b0ac');
  poly(svg, at(c.b), '#b4b0ac');
  dots(svg, at(c.dots), c.up);
  add(svg, 'text', { x: left + 3, y: bottom - 2, class: 'stamp' }, '© 2013 NinjaTrader, LLC');
  if (c.count) add(svg, 'text', { x: axis - 4, y: bottom - 7, class: 'stamp', 'text-anchor': 'end' }, c.count);
  if (c.note) add(svg, 'text', { x: 33, y: 100, class: 'note' }, c.note);
}

/* ---------- price charts ---------- */

function drawBars(svg, x0, sy, bars) {
  for (let i = 0; i < bars.length; i += 3) {
    const x = Math.round(x0 + 8 * i / 3);
    line(svg, x, bars[i] / sy, x, bars[i + 1] / sy, '#000', 2);
    add(svg, 'circle', { cx: x + .5, cy: bars[i + 2] / sy, r: 3 });
  }
}

function level(svg, x1, x2, y, price, kind) {
  const style = {
    thick: ['#fa8072', 3, '3 3'],
    thin: ['#e07a68', 2, '2 2'],
    dash: ['#e8e800', 1, '4 1'],
    blue: ['#87b8cc', 2, '2 2'],
  }[kind];
  line(svg, x1, y, x2, y, style[0], style[1], { 'stroke-dasharray': style[2] });
  const fill = { thick: '#fa8072', thin: '#fa8072', dash: '#ff0', blue: '#87ceeb' }[kind];
  add(svg, 'text', { x: x2 - 3, y: y - 3, fill, class: 'level-label' }, price);
}

function arrow(svg, x, y, up) {
  const s = up ? 1 : -1;
  add(svg, 'path', {
    d: `M${x} ${y}l${4 * s} ${6 * s}h${-2 * s}v${8 * s}h${-4 * s}v${-8 * s}h${-2 * s}z`,
    fill: up ? '#00f' : '#f0f',
  });
}

function wedge(svg, x, y, color, dir) {
  add(svg, 'path', { d: `M${x - 2 * dir} ${y - 4}v8l${5 * dir} -4z`, fill: color });
}

function tag(svg, x, y, right, text, dark) {
  add(svg, 'path', {
    d: `M${x} ${y}l6 -7H${right}v14H${x + 6}z`,
    fill: dark ? '#000' : '#d3d3d3', stroke: '#fff',
  });
  add(svg, 'text', { x: x + 7, y: y + 4, class: 'stamp', fill: dark ? '#fff' : '#000' }, text);
}

const DASH = { 'stroke-dasharray': '4 1 1 1' };
const HEAVY = { 'stroke-dasharray': '7 3 2 3', 'stroke-width': 2 };
const GREEN = '#1ee01e', LIME = '#14d214', PINK = '#e8b4b4', CYAN = '#20d8d8', GOLD = '#e6dc1e', MAGENTA = '#f0f', GREY = '#b4b0ac';

function draw144() {
  const svg = document.getElementById('p144');
  svg.setAttribute('viewBox', '326 48 741 889');
  const at = list => scaled(list, 325, 0, 2.091, 3);
  const low = list => scaled(list, 325, 480, 2.091, 3);

  add(svg, 'rect', { x: 337, y: 56, width: 600, height: 853, fill: '#765536' });
  add(svg, 'rect', { x: 326, y: 368, width: 680, height: 170, fill: '#5a416a', 'fill-opacity': .4 });

  drawBars(svg, 341.7, 3, [
    1357,1445,1374, 1305,1410,1358, 1357,1530,1509, 1435,1530,1440, 1420,1512,1494, 1490,1612,1596, 1570,1664,1578, 1490,1598,1559,
    1415,1565,1425, 1405,1515,1509, 1490,1632,1577, 1505,1598,1527, 1455,1580,1460, 1420,1495,1460, 1325,1480,1340, 1305,1435,1425,
    1248,1446,1256, 1217,1342,1256, 1160,1273,1168, 1135,1280,1239, 1217,1290,1272, 1208,1343,1220, 1150,1222,1206, 1120,1208,1136,
    1135,1215,1206, 1167,1350,1341, 1247,1376,1256, 1230,1362,1239, 1203,1275,1239, 1217,1360,1323, 1255,1348,1340, 1270,1328,1289,
    1305,1427,1341, 1265,1393,1271, 1186,1222,1206, 1186,1343,1323, 1235,1393,1358, 1285,1427,1289, 1190,1342,1323, 1255,1376,1272,
    1186,1282,1272, 1186,1290,1221, 1147,1260,1155, 1118,1223,1170, 1082,1208,1136, 982,1140,1020, 962,1037,968, 858,970,866,
    864,1022,1002, 898,1005,951, 303,954,444, 303,462,444, 252,684,645, 576,770,765, 712,802,765, 622,768,629,
    625,718,714, 630,715,696, 620,715,629, 603,665,612, 592,665,630, 507,632,528, 475,597,542, 490,580,561,
    542,688,681, 660,750,732, 712,800,747, 712,798,783, 780,872,867, 705,870,714, 588,735,594, 592,665,645,
    610,670,663, 628,735,697, 592,715,645, 628,683,663,
  ]);

  poly(svg, at([35,1136,67,1120,110,1126,150,1137,210,1131,252,1136,285,1118,302,1105,352,1078,369,1078,436,1051,470,1033,519,1018,553,1022,603,1010,653,989,720,978,760,967,800,940,854,892,871,800,904,703,920,683,954,658,987,648,1021,622,1054,603,1071,582,1104,553,1138,547,1172,545,1205,520,1240,514,1272,497]), GREEN, DASH);
  poly(svg, at([35,1870,51,1865,70,1871,110,1866,185,1874,201,1880,235,1879,252,1870,302,1874,320,1868,345,1848,369,1832,386,1826,420,1800,436,1790,460,1793,486,1787,503,1774,520,1775,553,1760,586,1761,603,1751,640,1760,680,1760,720,1745,754,1730,786,1718,820,1685,837,1679,854,1664,871,1706,887,1678,904,1690,920,1680,954,1640,988,1590,1005,1570,1021,1544,1054,1498,1088,1456,1112,1440,1138,1415,1172,1394,1190,1393,1205,1382,1238,1347,1272,1321]), GREEN, DASH);

  // slow pair
  poly(svg, at([35,1223,67,1201,118,1178,168,1168,203,1170]), CYAN);
  poly(svg, at([203,1170,252,1180,302,1202,369,1226,436,1247,503,1259,560,1266,620,1268]), PINK);
  poly(svg, at([620,1268,703,1262,754,1255,790,1253,820,1246,854,1232,887,1208,921,1180,954,1145,988,1107,1038,1055,1088,998,1138,940,1188,885,1238,830,1272,791]), CYAN);
  poly(svg, at([35,1109,51,1103,84,1107,118,1125,151,1145,168,1148,185,1168]), CYAN);
  poly(svg, at([185,1168,205,1190,235,1214,268,1240,302,1270,335,1285,369,1291,402,1289,419,1282,503,1275,570,1286,600,1272,620,1268]), PINK);
  poly(svg, at([620,1268,687,1265,737,1255,770,1235,803,1202,820,1185,854,1160,887,1080,904,1052,954,983,988,945,1038,882,1088,808,1138,755,1172,727,1205,688,1238,655,1272,618]), CYAN);

  // fast pair
  poly(svg, at([35,1228,51,1258,67,1315,90,1380,113,1440,134,1495,151,1537,168,1540,185,1565,218,1614,235,1614,252,1605,268,1565]), GOLD);
  poly(svg, at([268,1565,285,1525,314,1440,335,1358,369,1285,386,1240,402,1195,419,1160,436,1142,453,1157,486,1162,503,1158,519,1172]), LIME);
  poly(svg, at([519,1172,553,1235,570,1265,590,1275,620,1305,640,1322,703,1320,720,1308]), GOLD);
  poly(svg, at([720,1308,754,1240,787,1167,820,1060,854,985,871,850,887,745,904,685,937,610,954,570,988,545,1021,515,1038,515,1071,492,1088,495,1100,515]), LIME);
  poly(svg, at([1100,515,1121,555,1155,640,1172,700,1188,745,1205,710,1222,686,1250,685,1272,700]), GOLD);
  poly(svg, at([35,1180,51,1205,67,1240,90,1300,113,1360,147,1440,168,1490,201,1535,235,1578,252,1588,268,1580]), GOLD);
  poly(svg, at([268,1580,285,1565,302,1530,320,1495,338,1440,369,1370,402,1292,436,1206,470,1180,503,1170,519,1170]), LIME);
  poly(svg, at([519,1170,553,1205,586,1240,603,1253,637,1290,670,1310,705,1316,720,1310]), GOLD);
  poly(svg, at([720,1310,737,1303,770,1255,803,1200,820,1150,854,1060,871,990,887,900,904,830,937,720,971,640,1004,572,1021,553,1054,528,1080,510,1100,512]), LIME);
  poly(svg, at([1100,512,1121,528,1155,580,1188,663,1205,680,1240,685,1272,692]), GOLD);

  poly(svg, at([35,1501,70,1490,110,1500,150,1502,201,1504,252,1504,285,1495,302,1490,335,1470,369,1452,402,1440,436,1420,500,1401,586,1388,636,1377,687,1370,720,1360,754,1350,803,1315,854,1282,870,1250,904,1205,954,1145,988,1115,1054,1045,1088,1010,1121,985,1155,973,1188,962,1222,938,1272,911]), MAGENTA, HEAVY);

  line(svg, 326, 368, 1006, 368, '#0ff');
  line(svg, 326, 538, 1006, 538, '#0ff');

  level(svg, 327, 1006, 140.5, '1109.7', 'thick');
  level(svg, 327, 1006, 291, '1107.1', 'thin');
  level(svg, 327, 1006, 423.5, '1104.7', 'dash');
  level(svg, 327, 1006, 618.5, '1101.3', 'dash');

  at([68,1342,184,1392,268,1323,436,1120]).forEach(([x, y]) => arrow(svg, x, y, false));
  at([352,1258,84,1545,235,1597,268,1495]).forEach(([x, y]) => arrow(svg, x, y, true));
  at([62,1427,179,1478,263,1477]).forEach(([x, y]) => wedge(svg, x, y, '#f0f', 1));
  at([440,1222]).forEach(([x, y]) => wedge(svg, x, y, '#f0f', -1));
  at([274,1376,90,1445,241,1496]).forEach(([x, y]) => wedge(svg, x, y, '#00f', -1));
  at([345,1171]).forEach(([x, y]) => wedge(svg, x, y, '#00f', 1));

  // lower panel
  line(svg, 326, 664, 1067, 664, '#fff');
  line(svg, 327, 855, 1006, 855, '#00f', 2);
  poly(svg, low([35,859,70,871,101,895,134,945,168,1015,201,1070,235,1130,252,1157,268,1165,285,1164,302,1140,319,1095,352,1025,386,990,419,955,436,947,470,967,519,979,570,983,603,1002,636,1016,687,1048,720,1057,754,1045,787,1000,820,925,854,860,871,800,887,720,904,662,921,630,954,610,971,610,988,616,1005,632,1021,663,1038,668,1120,667,1155,676,1172,688,1205,722,1238,765,1272,830,1289,857]), GREY);
  poly(svg, low([35,948,51,980,84,1060,118,1140,151,1210,185,1230,218,1242,235,1238,268,1213,285,1210,302,1213,335,1203,369,1180,402,1145,436,1090,470,1042,503,1018,519,1022,553,1055,586,1072,603,1069,636,1080,670,1088,754,1084,803,1075,837,1050,887,990,937,890,954,853,1005,765,1021,720,1038,709,1054,706,1071,697,1088,694,1104,705,1138,770,1172,875,1205,935,1222,946,1240,950,1289,943]), GREY);
  const osc = [983,1010,1064,1094,1130,1181,1217,1238,1223,1232,1250,1253,1238,1226,1187,1175,1127,1088,1037,1016,1007,992,977,950,947,980,987,989,992,1016,1040,1049,1067,1066,1052,1070,1091,1092,1103,1097,1094,1082,1055,1040,1019,980,938,881,872,857,731,635,614,629,647,638,653,667,668,669,680,671,672,680,722,770,815,863,923,935,923,924,932,950,953,962];
  dots(svg, osc.map((v, i) => [341.7 + 8 * i, 480 + v / 3]), false);

  // axes
  line(svg, 1007, 53, 1007, 910, '#fff');
  line(svg, 326, 910, 1007, 910, '#fff');
  for (let i = 0; i <= 20; i++) {
    const y = Math.round(68.5 + 28.26 * i);
    line(svg, 1007, y, 1013, y, '#fff');
    add(svg, 'text', { x: 1014, y: y + 4, class: 'tick-label' }, (1111 - i * .5).toFixed(1));
  }
  ['1', '0.8', '0.6', '0.4', '0.2', '0', '-0.2'].forEach((t, i) => {
    const y = 689 + 33 * i;
    line(svg, 1007, y, 1013, y, '#fff');
    add(svg, 'text', { x: 1014, y: y + 4, class: 'tick-label' }, t);
  });
  ['15:37', '15:40', '15:42', '15:45', '15:48', '15:51', '15:57', '16:00', '16:00', '16:03', '16:05'].forEach((t, i) => {
    const x = 342 + 56 * i;
    line(svg, x, 910, x, 917, '#fff');
    add(svg, 'text', { x: x - 1, y: 927, class: 'tick-label', 'text-anchor': 'middle' }, t);
  });
  add(svg, 'text', { x: 328, y: 907, class: 'tick-label' }, '© 2013 NinjaTrader, LLC');
  add(svg, 'text', { x: 960, y: 227, class: 'countdown' }, '<86');
  tag(svg, 1008, 221, 1049, '1108.3', true);
}

function draw440() {
  const svg = document.getElementById('p440');
  svg.setAttribute('viewBox', '1075 48 1116 858');
  // the session before the open and the one after it
  const early = list => scaled(list, 1070, 0, 2.45, 2.8);
  const late = list => scaled(list, 1700, 0, 3, 2.8);
  const low = list => scaled(list, 1070, 540, 1.4, 3);

  add(svg, 'rect', { x: 1779, y: 56, width: 272, height: 822, fill: '#765536' });
  line(svg, 1671, 56, 1671, 879, '#c0c0c0');

  const zone = { fill: '#5a416a', 'fill-opacity': .4 };
  add(svg, 'rect', { x: 1751.5, y: 216.5, width: 268, height: 82, ...zone, stroke: '#0ff' });
  add(svg, 'rect', { x: 1759.5, y: 414.5, width: 192, height: 80, ...zone, stroke: '#0ff' });

  drawBars(svg, 1086.7, 2.8, [
    740,822,812, 801,881,865, 862,950,936, 877,996,980, 955,1066,1024, 970,1066,979, 955,1060,1055, 985,1088,988,
    970,1088,988, 885,990,887, 862,937,918, 801,930,820, 790,900,895, 830,937,834, 795,880,865, 770,867,780,
    770,925,918, 809,937,895, 885,980,971, 908,992,988, 970,1060,1055, 1008,1080,1047, 1045,1110,1095, 1042,1140,1047,
    985,1067,988, 978,1074,1010, 970,1048,1024, 1008,1140,1100, 1045,1118,1108, 1063,1140,1072, 1070,1138,1125, 1115,1163,1148,
    1137,1255,1245, 1235,1318,1262, 1243,1300,1268, 1265,1360,1352, 1345,1440,1436, 1390,1438,1413, 1398,1486,1468, 1442,1508,1453,
    1422,1476,1428, 1375,1430,1383, 1313,1393,1369, 1283,1393,1307, 1290,1376,1360, 1302,1406,1307, 1230,1308,1268, 1230,1294,1276,
    1243,1308,1276, 1252,1368,1360, 1345,1402,1374, 1352,1406,1360, 1270,1363,1276, 1213,1286,1223, 1168,1243,1238, 1199,1270,1223,
    1222,1278,1237, 1230,1318,1276, 1235,1340,1330, 1237,1340,1245, 1213,1264,1231, 1153,1233,1161, 1123,1180,1147, 1107,1155,1117,
    1107,1148,1139, 1045,1150,1063, 1045,1102,1072, 1048,1126,1055, 1040,1132,1117, 1085,1138,1131, 1008,1155,1024, 1015,1110,1094,
    1062,1162,1154, 1145,1230,1223, 1070,1270,1254, 1160,1308,1231, 1085,1256,1100, 902,1110,910, 820,950,826, 800,937,935,
    828,942,834, 700,852,705, 680,790,772, 770,852,843, 740,852,768, 717,768,758, 748,822,772, 742,792,750,
    735,813,789, 787,855,851, 745,866,750, 682,775,688, 650,698,666, 642,718,713, 610,716,635, 588,710,705,
    682,760,729, 695,795,772, 772,858,811, 740,820,812, 748,845,768, 698,780,705, 620,716,635, 628,716,652,
    611,705,688, 655,730,666, 650,720,688, 648,752,652, 642,752,697, 642,730,683, 611,690,635, 535,646,537,
    497,570,515, 222,500,414, 390,470,414, 382,433,391, 322,410,347, 328,440,439, 405,480,476, 375,500,391,
    378,440,383, 375,410,408,
  ]);

  poly(svg, [
    ...early([41,379,100,400,160,430,200,444,240,455,290,457,335,463,360,457,390,461,430,476,475,506,530,530,570,542,620,568,670,596,700,620,750,658,800,710,860,763,910,785,960,803,985,818,1005,821,1045,848,1100,862,1150,875,1200,881,1220,887,1295,897,1320,891,1395,887,1415,877,1440,870,1475,870,1495,858,1530,845]),
    ...late([0,830,60,795,105,765,150,745,200,725,300,710,345,688,400,665,440,645,490,630,590,605,657,583,705,572,753,555,801,545,849,520,873,487,921,463,945,450,993,425,1017,411,1041,404]),
  ], GREEN, DASH);
  poly(svg, [
    ...early([41,1029,80,1037,120,1063,160,1085,200,1104,240,1111,280,1122,335,1125,370,1138,430,1150,490,1173,550,1188,575,1200,650,1220,720,1258,780,1305,830,1332,880,1360,930,1388,970,1395,1050,1422,1080,1428,1140,1430,1200,1448,1260,1442,1300,1432,1360,1420,1470,1425,1500,1447,1540,1468]),
    ...late([15,1471,80,1457,130,1435,180,1412,225,1383,270,1355,345,1330,370,1308,430,1282,490,1262,540,1252,600,1235,680,1202,750,1181,820,1160,849,1144,873,1149,900,1136,945,1100,993,1072,1020,1065,1041,1050]),
  ], GREEN, DASH);
  poly(svg, early([41,629,120,651,200,685,280,718,335,738,410,770,490,815,560,860,620,895,690,945,780,1015,860,1100,940,1180,1000,1227,1060,1275,1140,1322,1220,1360,1280,1377,1320,1381,1355,1382]), PINK);
  poly(svg, early([41,674,80,693,120,718,150,735,200,763,250,780,330,804,360,825,420,868,490,930,560,975,640,1030,690,1085,750,1165,810,1240,860,1287,930,1338,1000,1380,1050,1410,1140,1420,1180,1432,1235,1430,1280,1417,1320,1400,1355,1382]), PINK);
  poly(svg, [
    ...early([1355,1382,1400,1381,1450,1371,1500,1363]),
    ...late([0,1354,80,1330,130,1307,225,1248,300,1200,370,1150,440,1092,490,1048,560,992,657,915,729,858,801,798,873,742,945,678,1000,630,1041,596]),
  ], CYAN);
  poly(svg, [
    ...early([1355,1382,1400,1368,1455,1336,1475,1333,1515,1325,1535,1312]),
    ...late([0,1304,60,1250,130,1182,200,1125,300,1048,345,1000,400,937,440,890,490,848,540,812,590,778,657,716,729,656,801,607,849,568,873,540,921,498,970,463,1041,426]),
  ], CYAN);
  poly(svg, [
    ...early([41,704,100,720,150,748,200,775,250,785,315,793,355,797,400,805,440,820,490,842,560,862,620,888,660,908,720,945,780,992,830,1035,880,1065,930,1088,1000,1110,1050,1135,1120,1148,1160,1157,1210,1168,1260,1168,1320,1162,1400,1151,1455,1147,1500,1150,1530,1152]),
    ...late([0,1150,60,1130,130,1095,200,1065,260,1038,330,1015,400,982,460,955,520,940,590,920,660,897,705,882,753,870,801,855,849,833,897,800,945,768,993,745,1041,727]),
  ], MAGENTA, HEAVY);

  level(svg, 1076, 2120, 107.5, '1109.7', 'thick');
  level(svg, 1076, 2120, 180, '1107.1', 'thin');
  level(svg, 1076, 2120, 243.5, '1104.7', 'dash');
  level(svg, 1076, 2120, 337.5, '1101.3', 'dash');
  level(svg, 1076, 2120, 468.5, '1096.5', 'dash');
  level(svg, 1076, 2120, 542, '1093.8', 'blue');

  late([226,735,394,628,466,667,490,682,538,725,586,682,658,596]).forEach(([x, y]) => arrow(svg, x, y, false));
  late([370,714,442,722,490,811,562,859,586,797,610,730]).forEach(([x, y]) => arrow(svg, x, y, true));
  late([217,774,385,654,482,752,529,774,578,774]).forEach(([x, y]) => wedge(svg, x, y, '#f0f', 1));
  late([668,660,474,720]).forEach(([x, y]) => wedge(svg, x, y, '#f0f', -1));
  late([452,592,500,760,594,729,571,785,378,654]).forEach(([x, y]) => wedge(svg, x, y, '#00f', -1));
  late([434,660,601,637]).forEach(([x, y]) => wedge(svg, x, y, '#00f', 1));

  // lower panel
  line(svg, 1075, 571, 2191, 571, '#fff');
  line(svg, 1076, 718, 2120, 718, '#00f', 2);
  poly(svg, low([25,555,36,562,58,588,92,650,125,700,140,717,152,718,170,685,192,640,205,620,215,614,228,616,255,645,270,655,305,664,325,677,345,698,362,710,400,719,428,742,455,780,480,825,500,850,515,857,527,855,545,800,565,745,580,728,595,718,607,710,640,650,675,592,700,565,730,520,750,470,770,415,785,392,815,385,842,400,870,406,888,404,905,370,920,325,940,240,955,190,970,162,990,160,1005,163,1020,180,1032,200,1045,200,1060,195,1085,189,1120,198,1155,212,1180,235,1205,270,1230,304,1255,316,1270,316,1290,290,1310,245,1330,195,1345,177,1358,175,1370,181,1380,192]), GREY);
  poly(svg, low([25,640,45,680,70,745,95,795,112,820,130,815,150,790,180,780,200,765,225,730,245,711,258,712,275,735,290,742,315,741,335,737,350,730,372,737,400,780,420,835,440,890,460,945,472,960,485,966,500,955,517,932,530,926,550,920,570,895,595,855,620,795,645,748,675,713,700,665,720,630,740,600,755,585,780,545,805,495,830,455,842,451,855,470,870,492,880,490,900,470,935,440,955,410,975,360,995,305,1015,260,1032,235,1070,226,1090,215,1100,220,1110,235,1125,270,1140,310,1155,338,1180,344,1205,340,1215,323,1232,327,1255,345,1270,341,1290,341,1310,335,1335,317,1355,297,1370,273,1380,262]), GREY);
  const osc = [662,683,716,749,788,800,830,830,827,797,776,734,716,686,668,632,638,632,650,665,692,710,734,740,725,719,713,728,741,737,746,755,785,812,830,863,905,929,959,971,970,953,932,893,875,842,803,770,743,740,739,734,704,668,638,614,596,590,599,584,569,539,509,479,464,431,410,392,393,401,380,382,404,440,476,497,482,425,356,335,293,230,204,203,185,176,175,173,185,215,215,206,194,200,191,206,224,257,293,326,341,340,323,317,326,328,338,339,353,362,359,335,311,269,239,215,188,194,212,206,205,215];
  dots(svg, osc.map((v, i) => [1087.7 + 8 * i, 540 + v / 3]), false);

  // crosshair
  line(svg, 1075, 254, 2121, 254, '#fff');
  line(svg, 1876, 53, 1876, 879, '#fff');

  // axes
  line(svg, 2121, 53, 2121, 879, '#fff');
  line(svg, 1075, 879, 2121, 879, '#fff');
  for (let i = 0; i <= 18; i++) {
    const y = Math.round(72.5 + 27.23 * i);
    line(svg, 2121, y, 2127, y, '#fff');
    add(svg, 'text', { x: 2128, y: y + 4, class: 'tick-label' }, (1111 - i).toFixed(1));
  }
  ['1.5', '1', '0.5', '0', '-0.5', '-1', '-1.5'].forEach((t, i) => {
    const y = Math.round(594.5 + 40.8 * i);
    line(svg, 2121, y, 2127, y, '#fff');
    add(svg, 'text', { x: 2128, y: y + 4, class: 'tick-label' }, t);
  });
  const stops = { '20:10': 25, '20:14': 103, '20:26': 181, '20:40': 259, '20:57': 337, '21:08': 415, '21:15': 494, '21:31': 572, '21:49': 651, '21:59': 729, '11/21': 808, '11:45': 898, '15:16': 976, '15:34': 1055, '': 1133, '15:49': 1212, '16:00': 1290, '16:06': 1368 };
  for (const t in stops) {
    const x = Math.round(1070 + stops[t] / 1.4);
    line(svg, x, 879, x, 885, '#fff');
    // the first label is kept inside the window
    add(svg, 'text', { x: Math.max(x - 1, 1090), y: 896, class: 'tick-label', 'text-anchor': 'middle' }, t);
  }
  add(svg, 'rect', { x: 1853, y: 885, width: 46, height: 14, fill: '#d3d3d3' });
  add(svg, 'text', { x: 1876, y: 896, class: 'stamp', 'text-anchor': 'middle' }, '15:41:12');
  add(svg, 'text', { x: 1077, y: 877, class: 'tick-label' }, '© 2013 NinjaTrader, LLC');
  add(svg, 'text', { x: 2074, y: 151, class: 'countdown' }, '<326');
  tag(svg, 2122, 146, 2163, '1108.3', true);
  tag(svg, 2122, 255, 2187, '1104.3', false);
}

/* ---------- price ladder ---------- */

const bids = { '1108.3': '(1)', '1108.2': 10, '1108.1': 31, '1108.0': 28, '1107.9': 39, '1107.8': 41 };
const asks = { '1108.7': 32, '1108.6': 29, '1108.5': 32, '1108.4': 20, '1108.3': 7 };

function drawLadder() {
  const body = document.getElementById('ladder');
  for (let p = 11102; p >= 11065; p--) {
    const price = (p / 10).toFixed(1);
    const tr = body.insertRow();
    tr.insertCell().textContent = bids[price] || '';
    const cell = tr.insertCell();
    cell.textContent = price;
    if (price === '1108.3') cell.className = 'last';
    if (price === '1108.2') cell.className = 'bid';
    tr.insertCell().textContent = asks[price] || '';
  }
}

small.forEach(drawSmall);
draw144();
draw440();
drawLadder();
```
